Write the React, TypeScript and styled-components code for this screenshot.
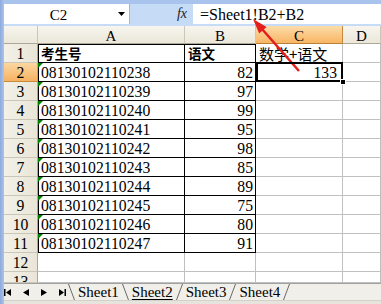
import React from 'react';
import styled, { createGlobalStyle } from 'styled-components';

const GlobalStyle = createGlobalStyle`
  *, *::before, *::after { box-sizing: border-box; }
  html, body { margin: 0; padding: 0; background: #fff; }
`;

const SERIF = `"Liberation Serif", "Times New Roman", serif`;
const CJK = `"Noto Sans CJK SC", "Noto Sans", sans-serif`;

const Window = styled.div`
  position: relative;
  width: 381px;
  height: 304px;
  overflow: hidden;
  display: flex;
  flex-direction: column;
  padding: 4px 0 0 4px;
  background: linear-gradient(90deg, #8eaadb 0, #a9c4ec 4px);
  font-family: ${SERIF};
  color: #000;
`;

const FormulaBar = styled.div`
  height: 22px;
  display: flex;
  padding-bottom: 2px;
  background: #c6dbf6;
`;

const NameBox = styled.div`
  width: 126px;
  display: flex;
  align-items: center;
  background: #fff;
  border-right: 1px solid #9fb7dc;
`;

const NameText = styled.div`
  flex: 1;
  text-align: center;
  font-size: 15px;
  line-height: 20px;
  padding-top: 1px;
`;

const DropButton = styled.div`
  width: 16px;
  display: flex;
  justify-content: center;
  align-items: center;
`;

const FxBox = styled.div`
  width: 63px;
  display: flex;
  justify-content: flex-end;
  align-items: center;
  padding-right: 6px;
  font-style: italic;
  font-size: 14px;
  color: #222;
`;

const FormulaInput = styled.div`
  flex: 1;
  background: #fff;
  padding: 1px 0 0 7px;
  font-size: 16px;
  line-height: 20px;
  white-space: nowrap;
`;

const Sheet = styled.div`
  display: grid;
  grid-template-columns: 34px 147px 71px 87px 1fr;
  grid-template-rows: 18px repeat(12, 19px) 11px;
  background: #fff;
`;

const ColHead = styled.div<{ $active?: boolean }>`
  overflow: hidden;
  text-align: center;
  font-size: 15px;
  line-height: 21px;
  border-right: 1px solid ${(p) => (p.$active ? '#c9893a' : '#cbc7b8')};
  border-bottom: 1px solid ${(p) => (p.$active ? '#b97f34' : '#aca899')};
  background: ${(p) =>
    p.$active
      ? 'linear-gradient(#fddcaa, #f8b664)'
      : 'linear-gradient(#f7f5ee, #ebe7d9)'};
`;

const RowHead = styled.div<{ $active?: boolean }>`
  overflow: hidden;
  text-align: center;
  font-size: 15.7px;
  line-height: 19px;
  border-right: 1px solid #aca899;
  border-bottom: 1px solid ${(p) => (p.$active ? '#c9893a' : '#cbc7b8')};
  background: ${(p) =>
    p.$active
      ? 'linear-gradient(#fcd7a0, #f6b263)'
      : 'linear-gradient(90deg, #f3f1e8, #e9e5d7)'};
`;

const Cell = styled.div<{ $boxed?: boolean; $right?: boolean; $left?: boolean; $top?: boolean }>`
  position: relative;
  overflow: hidden;
  white-space: nowrap;
  font-size: 15.7px;
  line-height: 19px;
  text-align: ${(p) => (p.$right ? 'right' : 'left')};
  padding: ${(p) => (p.$right ? '0 2px 0 0' : '0 0 0 3px')};
  border-right: 1px solid ${(p) => (p.$boxed ? '#000' : '#c0c0c0')};
  border-bottom: 1px solid ${(p) => (p.$boxed ? '#000' : '#c0c0c0')};
  box-shadow: ${(p) =>
    [p.$left ? 'inset 1px 0 0 #000' : '', p.$top ? 'inset 0 1px 0 #000' : '']
      .filter(Boolean)
      .join(', ') || 'none'};
`;

const SelectedCell = styled(Cell)`
  overflow: visible;
  padding-right: 5px;
  z-index: 2;
`;

const Selection = styled.span`
  position: absolute;
  top: -1px;
  left: 0;
  right: -1px;
  bottom: -1px;
  border: 2px solid #000;
  pointer-events: none;

  &::after {
    content: '';
    position: absolute;
    right: -5px;
    bottom: -5px;
    width: 6px;
    height: 6px;
    background: #000;
    border: 1px solid #fff;
  }
`;

const Flag = styled.span`
  position: absolute;
  top: 0;
  left: 0;
  width: 0;
  height: 0;
  border-top: 5px solid #008000;
  border-right: 5px solid transparent;
`;

const Label = styled.span<{ $bold?: boolean; $size?: number }>`
  font-family: ${CJK};
  font-weight: ${(p) => (p.$bold ? 700 : 400)};
  font-size: ${(p) => p.$size ?? 13.5}px;
`;

const TabBar = styled.div`
  height: 17px;
  display: flex;
  align-items: stretch;
  background: #f0efea;
  border-top: 1px solid #a0a0a0;
`;

const Nav = styled.div`
  width: 64px;
  display: flex;
  align-items: center;
  gap: 12px;
`;

const Tab = styled.div<{ $active?: boolean }>`
  padding: 0 3px;
  font-size: 15px;
  line-height: 16px;
  text-decoration: ${(p) => (p.$active ? 'underline' : 'none')};
  text-underline-offset: 2px;
`;

const StatusStrip = styled.div`
  flex: 1;
  background: #e6e4dc;
  border-top: 1px solid #d4d2c8;
`;

const ArrowLayer = styled.svg`
  position: absolute;
  top: 0;
  left: 0;
  pointer-events: none;
`;

const ids = [
  '08130102110238',
  '08130102110239',
  '08130102110240',
  '08130102110241',
  '08130102110242',
  '08130102110243',
  '08130102110244',
  '08130102110245',
  '08130102110246',
  '08130102110247',
];
const scores = [82, 97, 99, 95, 98, 85, 89, 75, 80, 91];

const Slash: React.FC<{ back?: boolean }> = ({ back }) => (
  <svg width="7" height="16" viewBox="0 0 7 16">
    <line
      x1={back ? 0.5 : 6.5}
      y1="0"
      x2={back ? 6.5 : 0.5}
      y2="16"
      stroke="#6a6a6a"
      strokeWidth="1"
    />
  </svg>
);

const NavIcon: React.FC<{ dir: 'first' | 'prev' | 'next' | 'last' }> = ({ dir }) => {
  const left = dir === 'first' || dir === 'prev';
  const bar = dir === 'first' || dir === 'last';
  const w = bar ? 7 : 6;
  const tri = left ? `${w} 0, ${bar ? 2 : 0} 3.5, ${w} 7` : `0 0, ${w - (bar ? 2 : 0)} 3.5, 0 7`;
  return (
    <svg width={w} height="7" viewBox={`0 0 ${w} 7`}>
      {bar && <rect x={left ? 0 : w - 1.5} y="0" width="1.5" height="7" fill="#000" />}
      <polygon points={tri} fill="#000" />
    </svg>
  );
};

const App: React.FC = () => {
  const cells: React.ReactNode[] = [];

  // header row
  cells.push(<ColHead key="corner" />);
  ['A', 'B', 'C', 'D'].forEach((c) =>
    cells.push(
      <ColHead key={c} $active={c === 'C'}>
        {c}
      </ColHead>
    )
  );

  for (let r = 1; r <= 13; r++) {
    cells.push(
      <RowHead key={`r${r}`} $active={r === 2}>
        {r}
      </RowHead>
    );
    const boxed = r <= 11;
    if (r === 1) {
      cells.push(
        <Cell key="a1" $boxed $left $top>
          <Label $bold>考生号</Label>
        </Cell>,
        <Cell key="b1" $boxed $top>
          <Label $bold>语文</Label>
        </Cell>,
        <Cell key="c1">
          <Label $size={15}>数学+语文</Label>
        </Cell>
      );
    } else if (boxed) {
      cells.push(
        <Cell key={`a${r}`} $boxed $left>
          <Flag />
          {ids[r - 2]}
        </Cell>,
        <Cell key={`b${r}`} $boxed $right>
          {scores[r - 2]}
        </Cell>
      );
      cells.push(
        r === 2 ? (
          <SelectedCell key="c2" $right>
            133
            <Selection />
          </SelectedCell>
        ) : (
          <Cell key={`c${r}`} />
        )
      );
    } else {
      cells.push(<Cell key={`a${r}`} />, <Cell key={`b${r}`} />, <Cell key={`c${r}`} />);
    }
    cells.push(<Cell key={`d${r}`} />);
  }

  return (
    <>
      <GlobalStyle />
      <Window>
        <FormulaBar>
          <NameBox>
            <NameText>C2</NameText>
            <DropButton>
              <svg width="7" height="4" viewBox="0 0 7 4">
                <polygon points="0 0, 7 0, 3.5 4" fill="#000" />
              </svg>
            </DropButton>
          </NameBox>
          <FxBox>fx</FxBox>
          <FormulaInput>=Sheet1!B2+B2</FormulaInput>
        </FormulaBar>

        <Sheet>{cells}</Sheet>

        <TabBar>
          <Nav>
            <NavIcon dir="first" />
            <NavIcon dir="prev" />
            <NavIcon dir="next" />
            <NavIcon dir="last" />
          </Nav>
          <Slash back />
          <Tab>Sheet1</Tab>
          <Slash back />
          <Tab $active>Sheet2</Tab>
          <Slash />
          <Tab>Sheet3</Tab>
          <Slash />
          <Tab>Sheet4</Tab>
          <Slash />
        </TabBar>
        <StatusStrip />

        <ArrowLayer width="381" height="304" viewBox="0 0 381 304">
          <line x1="299" y1="71" x2="262" y2="29" stroke="#e41d1d" strokeWidth="2.5" />
          <polygon points="253,19 266.6,26.9 259.2,33.5" fill="#e41d1d" />
        </ArrowLayer>
      </Window>
    </>
  );
};

export default App;
